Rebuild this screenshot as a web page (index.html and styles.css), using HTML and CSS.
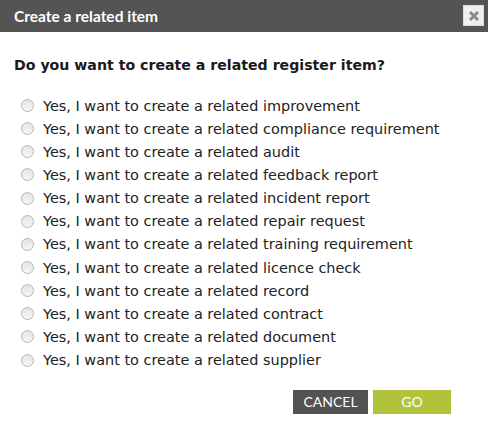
FILE: index.html
```html
<!DOCTYPE html>
<html>
<head>
<meta charset="utf-8">
<link rel="stylesheet" href="styles.css">
</head>
<body>
<div class="dialog">
  <div class="header">
    <span class="title">Create a related item</span>
    <span class="close"><svg width="12" height="12" viewBox="0 0 12 12"><path d="M2 2L10 10M10 2L2 10" stroke="#8a8a8a" stroke-width="3"/></svg></span>
  </div>
  <div class="body">
    <h2 class="question">Do you want to create a related register item?</h2>
    <ul class="options">
      <li><span class="radio"></span>Yes, I want to create a related improvement</li>
      <li><span class="radio"></span>Yes, I want to create a related compliance requirement</li>
      <li><span class="radio"></span>Yes, I want to create a related audit</li>
      <li><span class="radio"></span>Yes, I want to create a related feedback report</li>
      <li><span class="radio"></span>Yes, I want to create a related incident report</li>
      <li><span class="radio"></span>Yes, I want to create a related repair request</li>
      <li><span class="radio"></span>Yes, I want to create a related training requirement</li>
      <li><span class="radio"></span>Yes, I want to create a related licence check</li>
      <li><span class="radio"></span>Yes, I want to create a related record</li>
      <li><span class="radio"></span>Yes, I want to create a related contract</li>
      <li><span class="radio"></span>Yes, I want to create a related document</li>
      <li><span class="radio"></span>Yes, I want to create a related supplier</li>
    </ul>
    <div class="actions">
      <span class="btn cancel">CANCEL</span>
      <span class="btn go">GO</span>
    </div>
  </div>
</div>
</body>
</html>
```
FILE: styles.css
```css
html, body { margin: 0; padding: 0; background: #fff; }
.dialog { width: 488px; height: 422px; font-family: "DejaVu Sans", Verdana, sans-serif; color: #222; }
.header { height: 32px; background: #535453; display: flex; align-items: center; justify-content: space-between; padding: 0 4px 0 14px; box-sizing: border-box; }
.title { font-family: Lato, sans-serif; font-weight: bold; font-size: 15.5px; color: #fff; }
.close { width: 19px; height: 19px; background: #f0f0f0; border: 1px solid #dcdcdc; display: flex; align-items: center; justify-content: center; margin-top: -1px; }
.body { padding: 0 14px; }
.question { margin: 24px 0 0; font-size: 14.15px; font-weight: bold; line-height: 18px; color: #1a1a1a; }
.options { list-style: none; margin: 20px 0 0; padding: 0 0 0 7px; }
.options li { height: 23.15px; display: flex; align-items: center; font-size: 14.45px; color: #222; }
.radio { width: 11px; height: 11px; border-radius: 50%; border: 1px solid #b5b5b5; background: linear-gradient(#e4e4e4, #f6f6f6); margin-right: 9px; flex: none; }
.actions { display: flex; justify-content: flex-end; gap: 5px; margin-top: 18px; padding-right: 23px; }
.btn { height: 24px; display: flex; align-items: center; justify-content: center; font-family: Lato, sans-serif; font-size: 14px; color: #fff; }
.cancel { width: 75px; background: #525352; }
.go { width: 78px; background: #b1c33a; }
```
